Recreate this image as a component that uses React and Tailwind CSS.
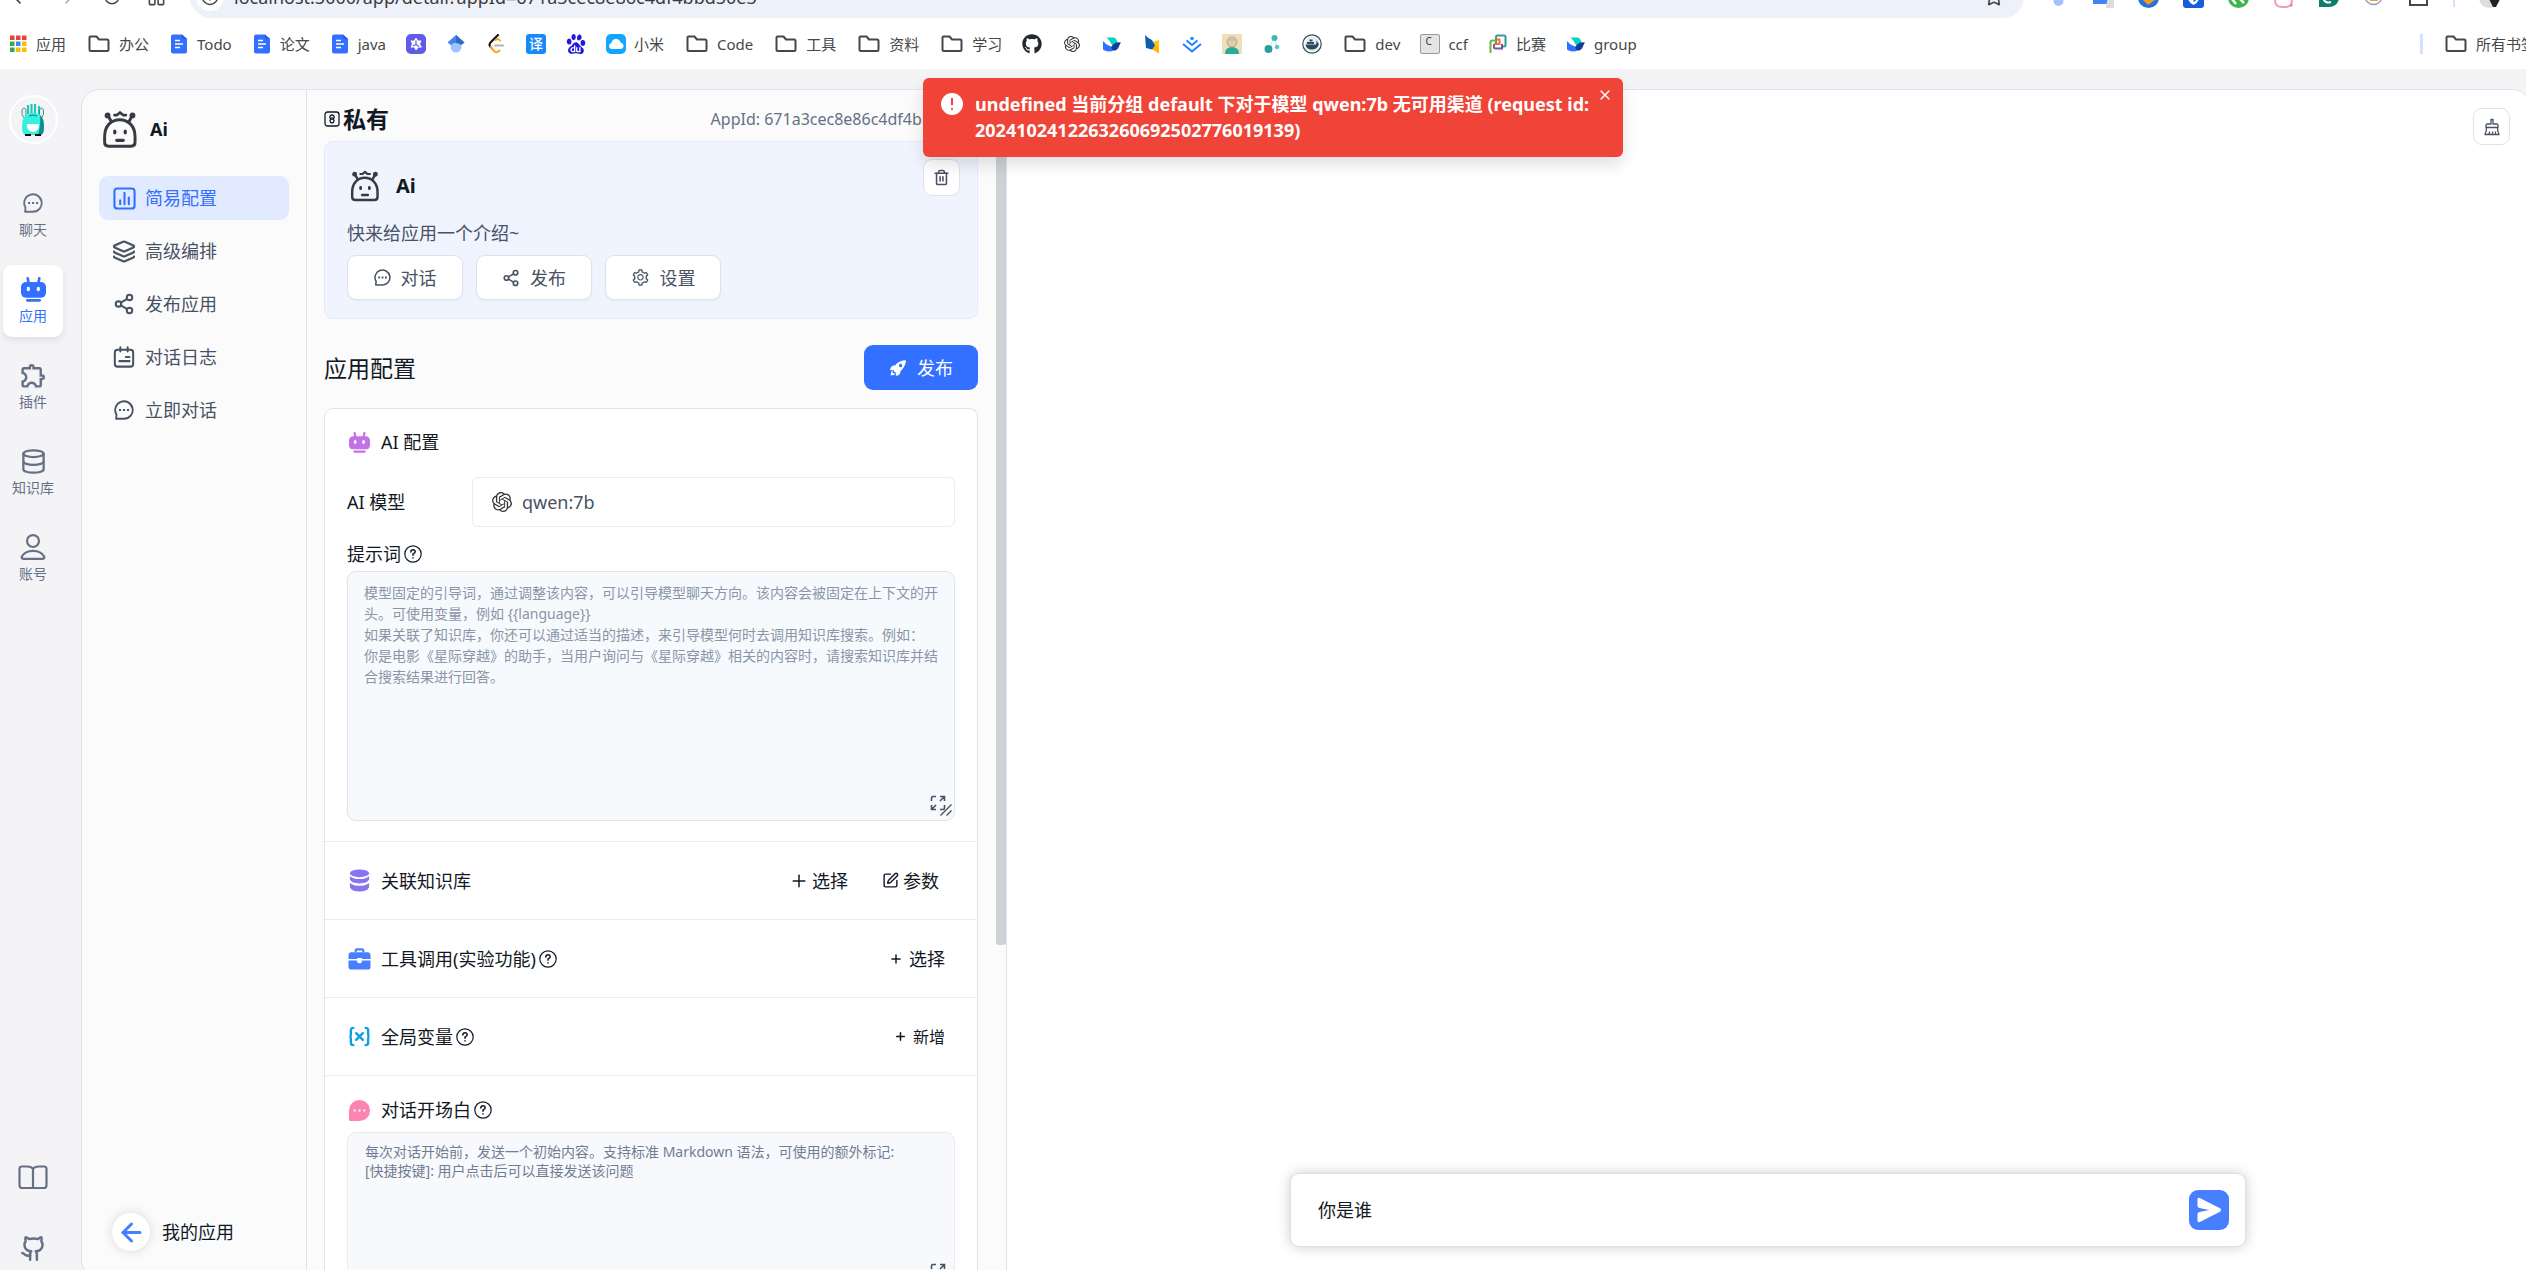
import React from "react";
import {
  ArrowLeft, ArrowRight, RotateCw, LayoutGrid, Star, Info, Layers, Share2, Github, Database, Plus, Trash2, SquarePen, X,
} from "lucide-react";
import { MdOutlineExtension } from "react-icons/md";
import { SiOpenai, SiBaidu } from "react-icons/si";
import { FaGithub } from "react-icons/fa";
import { IoRocketSharp } from "react-icons/io5";
import { AiOutlineSetting } from "react-icons/ai";

/* ---------- icons ---------- */

const FolderIcon = () => (
  <svg viewBox="0 0 25 20" className="h-5 w-[25px] shrink-0" fill="none" stroke="#474747" strokeWidth="2" strokeLinejoin="round">
    <path d="M3.500 3.500q0-1 1-1h6l2.500 3h8q1.500 0 1.500 1.500v8.500q0 1.500-1.500 1.500h-16q-1.500 0-1.500-1.500z" />
  </svg>
);

const Fav = ({ children }) => (
  <svg viewBox="0 0 20 20" className="h-5 w-5 shrink-0" fill="none">{children}</svg>
);

const AppsIcon = () => {
  const colors = ["#ea4335", "#ea4335", "#ea4335", "#34a853", "#4285f4", "#fbbc05", "#34a853", "#fbbc05", "#fbbc05"];
  return (
    <Fav>
      {colors.map((c, i) => (
        <rect key={i} x={2 + (i % 3) * 6} y={1.500 + Math.floor(i / 3) * 6} width="4.500" height="4.500" fill={c} />
      ))}
    </Fav>
  );
};

const DocIcon = () => (
  <Fav>
    <path d="M4 .5h9L18 5v12.500q0 2-2 2H4q-2 0-2-2v-15q0-2 2-2z" fill="#3370ff" />
    <path d="M13 .5 18 5h-3q-2 0-2-2z" fill="#245bdb" />
    <path d="M6 6.500h5M6 10h8M6 13.500h5" stroke="#fff" strokeWidth="1.400" />
  </Fav>
);

const PurpleIcon = () => (
  <Fav>
    <rect width="20" height="20" rx="5" fill="#6259e8" />
    <path d="M10 3.500l2 3h3.500L14 10l2 3.500h-3.500L10 16.500l-2-3H4.500L6 10 4.500 6.500H8z" fill="#fff" />
    <path d="M10 6.500v4l3 2M10 10.500l-3 1.500" stroke="#6259e8" strokeWidth="1.200" />
  </Fav>
);

const ScholarIcon = () => (
  <Fav>
    <circle cx="10" cy="13" r="5.500" fill="#a0c3ff" />
    <path d="M10 1 1.500 8.500 5 11q5-4.500 10 0l3.500-2.500z" fill="#4285f4" />
    <path d="M10 1v8q3.500 0 5 2l3.500-2.500z" fill="#356ac3" />
  </Fav>
);

const LeetIcon = () => (
  <Fav>
    <path d="M12 1 4.500 8.500q-2 2.300 0 4.500" stroke="#111" strokeWidth="2" strokeLinecap="round" />
    <path d="M14 6.500q-2-2.500-4.500-.5M4.500 13l3.500 4q2.500 2.500 5.500-.5" stroke="#ffa116" strokeWidth="2" strokeLinecap="round" />
    <path d="M9 11.500h8" stroke="#b3b3b3" strokeWidth="2" strokeLinecap="round" />
  </Fav>
);

const TranslateIcon = () => (
  <span className="flex h-5 w-5 shrink-0 items-center justify-center rounded-[3px] bg-[#1989fa] text-[14px] leading-5 font-medium text-white">译</span>
);

const CloudIcon = () => (
  <Fav>
    <rect width="20" height="20" rx="5" fill="#12a6ff" />
    <path d="M6 15q-3-.3-3-3 0-2.500 2.500-3Q6 5 10 5t4.500 3.500Q17.500 9 17.500 12T14 15z" fill="#fff" />
  </Fav>
);

const LarkIcon = () => (
  <Fav>
    <path d="M4.500 3.500h8q2.500 2 3 5L10.500 12Q8.500 7 4.500 3.500z" fill="#00d6b9" />
    <path d="M1 7q6 7 14 6-3 4.500-8 4.500-3.500 0-6-2z" fill="#3370ff" />
    <path d="M9.500 12.500q4-5.500 9.500-4-1 1-2 4-2 4.500-5 4-3-1-2.500-4z" fill="#133c9a" />
  </Fav>
);

const ButterflyIcon = () => (
  <Fav>
    <path d="M3 1q3 3.500 7 5v9.500L4 14z" fill="#0b5cad" />
    <path d="M10 8.500q2-1.500 7-2.500v8q-4 0-7 2z" fill="#ffc20e" />
    <path d="M10 10v5l7 4.500V14z" fill="#ffb300" />
    <path d="M10 6v9.500l3-4z" fill="#0b5cad" />
  </Fav>
);

const JuejinIcon = () => (
  <Fav>
    <path d="M10 2.500 12.300 4.500 10 6.500 7.700 4.500z" fill="#1e80ff" />
    <path d="M4.500 6.500 10 11l5.500-4.500M1 10l9 7.500 9-7.500" stroke="#1e80ff" strokeWidth="2" />
  </Fav>
);

const PortraitIcon = () => (
  <Fav>
    <rect width="20" height="20" fill="#f1dfb8" />
    <path d="M3 20q0-7 7-7t7 7z" fill="#2aa9a0" />
    <circle cx="10" cy="8" r="5" fill="#e3cda4" stroke="#a89f8a" />
    <path d="M5 8q0-6 5-6t5 6q-4-3-10 0z" fill="#c9c3ae" />
  </Fav>
);

const NodesIcon = () => (
  <Fav>
    <path d="M7 14l5-10 3 9" stroke="#bfe0e0" strokeWidth="1" />
    <circle cx="6.500" cy="15" r="4" fill="#2a9d9c" />
    <circle cx="12.500" cy="4" r="3" fill="#45b5b3" />
    <circle cx="15" cy="13" r="2.300" fill="#63c4c2" />
  </Fav>
);

const WhaleIcon = () => (
  <Fav>
    <circle cx="10" cy="10" r="9.200" fill="#fff" stroke="#394d54" strokeWidth="1.200" />
    <circle cx="10" cy="10" r="7.500" fill="#e6eef1" />
    <path d="M3.500 10.500h10.500q1-2.500 0-4 2 1 2 3h1q-1 6-7.500 6-5 0-6-5z" fill="#2b4a66" />
    <path d="M5 8h7v2H5zM7.500 5.500h3v2h-3z" fill="#394d54" />
  </Fav>
);

const KeycapIcon = () => (
  <span className="flex h-5 w-5 shrink-0 rounded-[2px] border border-[#9a9a9a] bg-[#e4e4e4] pl-1 text-[10px] leading-[13px] text-[#333]">C</span>
);

const SquaresIcon = () => (
  <Fav>
    <path d="M8 9V3q0-1.500 1.500-1.500H16q1.500 0 1.500 1.500v8q0 1.500-1.500 1.500h-2" stroke="#2f9e8f" strokeWidth="2" />
    <path d="M2.500 19V8q0-1.500 1.500-1.500h4" stroke="#6eb43f" strokeWidth="2" />
    <path d="M6 10v3q0 1.500 1.500 1.500H14V10" stroke="#7a52a8" strokeWidth="2" />
    <path d="M6 10h5.500V5.500H8" stroke="#e8703a" strokeWidth="2" />
  </Fav>
);

const FaceLogo = ({ className }) => (
  <svg viewBox="0 0 110 116" className={className} fill="none" stroke="#363c42" strokeWidth="9" strokeLinecap="round" strokeLinejoin="round">
    <path d="M8 80C8 45 30 28 54 28S101 45 101 80V97Q101 109 89 109H20Q8 109 8 97Z" />
    <path d="M18 15L28 33M93 15L83 33" />
    <circle cx="17" cy="15" r="6" fill="#363c42" strokeWidth="6" />
    <circle cx="93" cy="15" r="6" fill="#363c42" strokeWidth="6" />
    <path d="M38 14H46L55 6L64 14H73" strokeWidth="8" />
    <path d="M39 63v5M71 63v5M45 91h20" strokeWidth="10" />
  </svg>
);

const RobotIcon = ({ className, eye = "#fff" }) => (
  <svg viewBox="0 0 75 75" className={className} fill="currentColor">
    <path d="M20 4L23 18M55 4L52 18" stroke="currentColor" strokeWidth="8" strokeLinecap="round" />
    <rect y="15" width="75" height="47" rx="15" />
    <ellipse cx="22" cy="36" rx="5" ry="7" fill={eye} />
    <ellipse cx="52" cy="36" rx="5" ry="7" fill={eye} />
    <rect x="15" y="66" width="45" height="8" rx="4" />
  </svg>
);

const ChatIcon = ({ className }) => (
  <svg viewBox="0 0 24 24" className={className} fill="none" stroke="currentColor" strokeWidth="2.200" strokeLinejoin="round">
    <path d="M12 22.500H2.500L3 17.500A10.500 10.500 0 1 1 12 22.500z" />
    <path d="M6 12h2.500M10.800 12h2.500M15.600 12h2.500" strokeWidth="2.500" />
  </svg>
);

const UserIcon = ({ className }) => (
  <svg viewBox="0 0 24 24" className={className} fill="none" stroke="currentColor" strokeWidth="2" strokeLinejoin="round">
    <circle cx="12" cy="6.500" r="5.500" />
    <path d="M3.500 23Q1.500 23 1.500 21 4.500 15.500 12 15.500T22.500 21q0 2-2 2z" />
  </svg>
);

const BookIcon = ({ className }) => (
  <svg viewBox="0 0 30 24" className={className} fill="none" stroke="currentColor" strokeWidth="2.200" strokeLinejoin="round">
    <path d="M15 23V4Q13.500 1.500 9.500 1.500H4Q1.500 1.500 1.500 4V20Q1.500 23 4 23H26Q28.500 23 28.500 20V4Q28.500 1.500 26 1.500H20.500Q16.500 1.500 15 4" />
  </svg>
);

const ChartIcon = ({ className }) => (
  <svg viewBox="0 0 24 24" className={className} fill="none" stroke="currentColor" strokeWidth="2.200" strokeLinecap="round">
    <rect x="1.500" y="1.500" width="21" height="21" rx="3" />
    <path d="M7.500 14v4M12 6v12M16.500 11v7" />
  </svg>
);

const LogIcon = ({ className }) => (
  <svg viewBox="0 0 24 24" className={className} fill="none" stroke="currentColor" strokeWidth="2.200" strokeLinecap="round">
    <rect x="2" y="4" width="20" height="18.500" rx="3" />
    <path d="M8 1.500V6M16 1.500V6M14 12h4M7 16.500h11" />
  </svg>
);

const LockIcon = () => (
  <svg viewBox="0 0 16 16" className="h-4 w-4" fill="none" stroke="#111824" strokeWidth="1.300">
    <rect x="1" y="1" width="14" height="14" rx="2.500" />
    <path d="M8 4a2 2 0 0 1 1.500 3.500v1A2 2 0 1 1 6.500 8.500v-1A2 2 0 0 1 8 4zM8 6v3" />
  </svg>
);

const HelpIcon = () => (
  <svg viewBox="0 0 18 18" className="h-[18px] w-[18px] shrink-0" fill="none" stroke="#111824" strokeWidth="1.200" strokeLinecap="round">
    <circle cx="9" cy="9" r="8.200" />
    <path d="M6.800 7Q7 4.800 9 4.800T11.200 6.800Q11.200 8 9 9.200V10.300M9 12.700v.2" strokeWidth="1.500" />
  </svg>
);

const BrushIcon = () => (
  <svg viewBox="0 0 16 18" className="h-[18px] w-4" fill="none" stroke="#485264" strokeWidth="1.300" strokeLinejoin="round">
    <path d="M7 6V1.500h2V6h3.500q1.500 0 1.500 1.500v2H2v-2Q2 6 3.500 6zM2.500 9.500q0 4-1.500 7h14q-1.500-3-1.500-7M5 16.500l.7-3M8.300 16.500l.5-3M11.500 16.500v-3" />
  </svg>
);

const StackIcon = () => (
  <svg viewBox="0 0 24 24" className="h-[23px] w-[23px]" fill="#8774ee">
    <ellipse cx="12" cy="4.500" rx="10" ry="4" />
    <path d="M2 7.500Q6 10.500 12 10.500T22 7.500V11Q20 15 12 15T2 11z" />
    <path d="M2 14.500Q6 17.500 12 17.500T22 14.500V19Q20 23.500 12 23.500T2 19z" />
  </svg>
);

const BriefcaseIcon = () => (
  <svg viewBox="0 0 24 24" className="h-[23px] w-[23px]" fill="#487fff">
    <path d="M8 5.500V4Q8 2.500 9.500 2.500H14.500Q16 2.500 16 4V5.500" fill="none" stroke="#487fff" strokeWidth="2.200" />
    <path d="M3.500 5.500H20.500Q23.500 5.500 23.500 9V12.500H14.500V11.500H9.500V12.500H.5V9Q.5 5.500 3.500 5.500z" />
    <path d="M.5 14H9.500V15Q9.500 17 12 17T14.500 15V14H23.500V20.500Q23.500 23.500 20.500 23.500H3.500Q.5 23.500 .5 20.500z" />
    <path d="M11 11.500h2V14.500H11z" fill="#fff" />
  </svg>
);

const VariableIcon = () => (
  <svg viewBox="0 0 24 24" className="h-[23px] w-[23px]" fill="none" stroke="#0e9fe0" strokeWidth="2.500" strokeLinecap="round">
    <path d="M5.500 3Q3 3 3 5.500V9Q3 12 1.500 12 3 12 3 15V18.500Q3 21 5.500 21M18.500 3Q21 3 21 5.500V9Q21 12 22.500 12 21 12 21 15V18.500Q21 21 18.500 21M8.500 8.500l7 7M15.500 8.500l-7 7" />
  </svg>
);

const GreetingIcon = () => (
  <svg viewBox="0 0 24 24" className="h-[23px] w-[23px]" fill="#fd83b0">
    <path d="M12 1A11 11 0 1 1 12 23H3Q1 23 1 21V12A11 11 0 0 1 12 1z" />
    <path d="M6 12h2M11 12h2M16 12h2" stroke="#fff" strokeWidth="2" />
  </svg>
);

const ExpandIcon = () => (
  <svg viewBox="0 0 16 16" className="h-4 w-4" fill="none" stroke="#485264" strokeWidth="1.600">
    <path d="M1.500 6V3Q1.500 1.500 3 1.500H6M10 1.500H14.500V6M14 2L10 6M1.500 10V14.500H6M2 14L6 10M14.500 10V13Q14.500 14.500 13 14.500H10" />
  </svg>
);

const GripIcon = () => (
  <svg viewBox="0 0 12 12" className="h-3 w-3" stroke="#444" strokeWidth="1.200">
    <path d="M.5 11.500l11-11M6.500 11.500l5-5" />
  </svg>
);

const AvatarArt = () => (
  <svg viewBox="0 0 24 34" className="h-[34px] w-6">
    <path d="M7 2v9M10.500 1v10M14 1v10M18 3v8" stroke="#20c9b8" strokeWidth="2.200" />
    <path d="M1 7q2-4 4 0v6l-2 2q-3-3-2-8zM22.500 7q-2-4-4 0v6l2 2q3-3 2-8z" fill="#d8f5f0" stroke="#3a6f70" strokeWidth=".8" />
    <path d="M5 12q7-5 14 0 4 3 4 12 0 8-4 8H5q-4 0-4-8 0-9 4-12z" fill="#35f0dc" />
    <path d="M19 12q4 3 4 12 0 8-4 8h-2q3-10 2-20z" fill="#0f8d92" />
    <path d="M6 21h12q0 8-6 8t-6-8z" fill="#fff" />
    <path d="M8 13q4-2 8 0" stroke="#137a80" fill="none" />
    <path d="M4 32h6M14 32h6" stroke="#111" strokeWidth="2" />
  </svg>
);

/* ---------- browser chrome ---------- */

const bookmarks = [
  [<AppsIcon />, "应用"], [<FolderIcon />, "办公"], [<DocIcon />, "Todo"], [<DocIcon />, "论文"], [<DocIcon />, "java"],
  [<PurpleIcon />], [<ScholarIcon />], [<LeetIcon />], [<TranslateIcon />],
  [<SiBaidu className="h-5 w-5 shrink-0 text-[#2319dc]" />], [<CloudIcon />, "小米"], [<FolderIcon />, "Code"],
  [<FolderIcon />, "工具"], [<FolderIcon />, "资料"], [<FolderIcon />, "学习"],
  [<FaGithub className="h-5 w-5 shrink-0 text-[#24292e]" />], [<SiOpenai className="mx-0.5 h-4 w-4 shrink-0 text-[#333]" />],
  [<LarkIcon />], [<ButterflyIcon />], [<JuejinIcon />], [<PortraitIcon />], [<NodesIcon />], [<WhaleIcon />],
  [<FolderIcon />, "dev"], [<KeycapIcon />, "ccf"], [<SquaresIcon />, "比赛"], [<LarkIcon />, "group"],
];

const Ext = ({ children }) => (
  <svg viewBox="0 0 21 21" className="h-[21px] w-[21px] shrink-0" fill="none">{children}</svg>
);

function BrowserBar() {
  return (
    <header className="flex h-[69px] shrink-0 flex-col overflow-hidden bg-white text-[#474747]">
      <div className="flex h-[18px] shrink-0 items-end overflow-hidden">
        <div className="flex h-[42px] w-[190px] shrink-0 items-center justify-between pr-6 pl-2.5">
          <ArrowLeft size={20} />
          <ArrowRight size={20} className="text-[#b5b5b5]" />
          <RotateCw size={18} />
          <LayoutGrid size={19} />
        </div>
        <div className="flex h-[42px] min-w-0 flex-1 items-center rounded-full bg-[#edf1fa] pr-5 pl-[6px]">
          <span className="flex h-7 w-7 shrink-0 items-center justify-center rounded-full bg-white">
            <Info size={18} />
          </span>
          <input
            aria-label="地址"
            readOnly
            value="localhost:5000/app/detail?appId=671a3cec8e86c4df4bbd50e3"
            className="ml-2.5 min-w-0 flex-1 bg-transparent text-[18px] text-[#3c3c3c] outline-none"
          />
          <Star size={20} />
        </div>
        <div className="flex h-[42px] shrink-0 items-center gap-6 pl-6">
          <Ext><circle cx="10.500" cy="14" r="5" fill="#a3c3ff" /></Ext>
          <Ext><path d="M0 0h15l3 17H0z" fill="#4285f4" /><path d="M15 8h6v13h-8z" fill="#dcdcdc" /></Ext>
          <Ext><circle cx="10.500" cy="10.500" r="10.500" fill="#2374d8" /><path d="M4 12l10-4 3 5-7 5z" fill="#f39a2d" /></Ext>
          <Ext><rect width="21" height="21" rx="3" fill="#175ddc" /><path d="M5 4h11v7q0 4-5.500 7Q5 15 5 11z" fill="#fff" /><path d="M10.500 6v9q4-2 4-4.500V6z" fill="#175ddc" /></Ext>
          <Ext><circle cx="10.500" cy="10.500" r="10.500" fill="#3db54a" /><path d="M4 12l4 5M10 10l6 6" stroke="#fff" strokeWidth="2.500" /></Ext>
          <Ext><path d="M2 3v10q0 7 7 7h3q7 0 7-7V3" stroke="#f79ab8" strokeWidth="2" /><path d="M18 18l1 1" stroke="#f26a96" strokeWidth="3" /></Ext>
          <Ext><path d="M1 0h20v12q-2 8-10 8H1z" fill="#0b7f69" /><path d="M5 11q2 6 8 4" stroke="#fff" strokeWidth="2" /></Ext>
          <Ext><circle cx="10.500" cy="9" r="8.500" stroke="#8d9fc7" strokeWidth="1.500" /><path d="M7 10h8v4H7z" fill="#f0a030" /></Ext>
          <Ext><path d="M2 2v16h17V2" stroke="#474747" strokeWidth="2" /></Ext>
          <span className="h-5 w-0.5 bg-[#d3e3fd]" />
          <Ext><circle cx="10.500" cy="10.500" r="10.500" fill="#ddd" /><path d="M10 12h11l-4 8h-3z" fill="#222" /></Ext>
          <span className="-mr-1 h-1.5 w-1.5 rounded-full bg-[#474747]" />
        </div>
      </div>
      <nav aria-label="书签" className="flex flex-1 items-center gap-5 pl-2 text-[15px] leading-5 whitespace-nowrap">
        {bookmarks.map(([icon, text], i) => (
          <a key={i} href="#" className="flex items-center gap-2">
            {icon}
            {text && <span>{text}</span>}
          </a>
        ))}
        <span className="ml-auto h-5 w-[3px] shrink-0 bg-[#d3e3fd]" />
        <a href="#" className="-mr-[10px] flex shrink-0 items-center gap-2">
          <FolderIcon />
          <span>所有书签</span>
        </a>
      </nav>
    </header>
  );
}

/* ---------- app ---------- */

const sideItems = [
  [<ChatIcon className="h-5 w-5" />, "聊天"],
  [<RobotIcon className="h-[25px] w-[25px]" />, "应用", true],
  [<MdOutlineExtension className="h-[29px] w-[29px]" />, "插件"],
  [<Database size={27} strokeWidth={2} />, "知识库"],
  [<UserIcon className="h-[26px] w-[26px]" />, "账号"],
];

function Rail() {
  return (
    <aside className="flex w-[81px] shrink-0 flex-col pt-[26px] pr-[15px] pb-2 text-[#667085]">
      <a href="#" aria-label="头像" className="mx-auto flex h-[49px] w-[49px] items-center justify-center rounded-full border-2 border-white">
        <AvatarArt />
      </a>
      <nav className="mt-[35px] flex flex-col gap-3.5 pl-[3px]">
        {sideItems.map(([icon, text, active]) => (
          <a
            key={text}
            href="#"
            className={
              "flex h-[72px] w-[60px] flex-col items-center justify-center gap-1 rounded-[9px] text-[14px] leading-5 " +
              (active ? "bg-white text-[#3370ff] shadow-[0_3px_6px_rgba(19,51,107,0.1)]" : "")
            }
          >
            <span className="flex h-[26px] items-center justify-center">{icon}</span>
            {text}
          </a>
        ))}
      </nav>
      <div className="mt-auto flex flex-col items-center gap-[46px]">
        <a href="#" aria-label="文档"><BookIcon className="h-6 w-[30px]" /></a>
        <a href="#" aria-label="GitHub"><Github size={27} strokeWidth={2.200} /></a>
      </div>
    </aside>
  );
}

const navItems = [
  [<ChartIcon className="h-[23px] w-[23px]" />, "简易配置", true],
  [<Layers size={25} strokeWidth={2.200} />, "高级编排"],
  [<Share2 size={22} strokeWidth={2.200} />, "发布应用"],
  [<LogIcon className="h-[22px] w-[22px]" />, "对话日志"],
  [<ChatIcon className="h-5 w-5" />, "立即对话"],
];

function AppNav() {
  return (
    <div className="flex w-[225px] shrink-0 flex-col border-r border-[#dfe2ea] px-[17px] pt-[18px] pb-[26px]">
      <div className="flex h-[42px] items-center gap-3 pl-[3px]">
        <FaceLogo className="h-[39px] w-9" />
        <h1 className="text-[18px] leading-6 font-bold text-[#111824]">Ai</h1>
      </div>
      <nav className="mt-[26px] flex flex-col gap-[9px]">
        {navItems.map(([icon, text, active]) => (
          <a
            key={text}
            href="#"
            className={
              "flex h-11 items-center gap-[9px] rounded-[9px] pl-[13px] text-[18px] leading-6 " +
              (active ? "bg-[#e1eaff] text-[#3370ff]" : "text-[#485264]")
            }
          >
            <span className="flex w-6 items-center justify-center">{icon}</span>
            {text}
          </a>
        ))}
      </nav>
      <a href="#" className="mt-auto flex items-center gap-3 pl-[13px] text-[18px] leading-6 text-[#111824]">
        <span className="flex h-[38px] w-[38px] items-center justify-center rounded-full bg-white shadow-[0_0_12px_rgba(0,0,0,0.14)]">
          <ArrowLeft size={29} strokeWidth={2.500} className="text-[#487fff]" />
        </span>
        我的应用
      </a>
    </div>
  );
}

const OutlineButton = ({ icon, children }) => (
  <button className="flex h-[45px] w-[116px] items-center justify-center gap-[10px] rounded-[9px] border border-[#dfe2ea] bg-white text-[18px] leading-6 text-[#485264] shadow-[0_1px_2px_rgba(19,51,107,0.06)]">
    {icon}
    {children}
  </button>
);

const Row = ({ icon, title, help, children }) => (
  <div className="flex h-[78px] items-center border-t border-[#e8ebf0] pr-6 pl-[23px]">
    <span className="mr-[10px]">{icon}</span>
    <h3 className="flex items-center gap-[3px] text-[18px] leading-6">{title}{help && <HelpIcon />}</h3>
    <div className="ml-auto flex items-center">{children}</div>
  </div>
);

const promptHint = `模型固定的引导词，通过调整该内容，可以引导模型聊天方向。该内容会被固定在上下文的开头。可使用变量，例如 {{language}}
如果关联了知识库，你还可以通过适当的描述，来引导模型何时去调用知识库搜索。例如：
你是电影《星际穿越》的助手，当用户询问与《星际穿越》相关的内容时，请搜索知识库并结合搜索结果进行回答。`;

const greetingHint = `每次对话开始前，发送一个初始内容。支持标准 Markdown 语法，可使用的额外标记:
[快捷按键]: 用户点击后可以直接发送该问题`;

function ConfigPanel() {
  return (
    <section className="flex w-[700px] shrink-0 overflow-hidden border-r border-[#dfe2ea]">
      <div className="min-w-0 flex-1 pr-[18px] pl-[17px] text-[#111824]">
        <div className="flex h-[51px] items-center pt-[7px]">
          <LockIcon />
          <h2 className="ml-[3px] text-[23px] leading-7 font-bold">私有</h2>
          <span className="ml-auto text-[16px] leading-6 text-[#667085]">AppId: 671a3cec8e86c4df4bbd50e3</span>
        </div>

        <div className="relative rounded-[9px] border border-[#e1eaff] bg-[#f0f4ff] px-[22px] pt-[23px] pb-[18px]">
          <div className="flex h-[42px] items-center gap-4">
            <FaceLogo className="ml-[3px] h-8 w-[30px]" />
            <h3 className="text-[20px] leading-7 font-bold">Ai</h3>
          </div>
          <p className="mt-[13px] text-[18px] leading-[27px] text-[#485264]">快来给应用一个介绍~</p>
          <div className="mt-2 flex gap-[13px]">
            <OutlineButton icon={<ChatIcon className="h-[17px] w-[17px]" />}>对话</OutlineButton>
            <OutlineButton icon={<Share2 size={18} strokeWidth={2.200} />}>发布</OutlineButton>
            <OutlineButton icon={<AiOutlineSetting size={19} />}>设置</OutlineButton>
          </div>
          <button aria-label="删除" className="absolute top-[17px] right-[17px] flex h-[37px] w-[37px] items-center justify-center rounded-[9px] border border-[#dfe2ea] bg-white text-[#485264]">
            <Trash2 size={17} strokeWidth={2.200} />
          </button>
        </div>

        <div className="mt-[26px] flex h-[45px] items-center justify-between">
          <h2 className="text-[23px] leading-7">应用配置</h2>
          <button className="flex h-[45px] w-[114px] items-center justify-center gap-[10px] rounded-[9px] bg-[#3370ff] text-[18px] leading-6 text-white">
            <IoRocketSharp size={18} />
            发布
          </button>
        </div>

        <div className="mt-[18px] rounded-t-[9px] border border-b-0 border-[#dfe2ea] bg-white">
          <div className="px-[22px] pt-[19px] pb-5">
            <div className="flex h-7 items-center gap-[9px] text-[18px] leading-6">
              <RobotIcon className="mx-0.5 h-[21px] w-[21px] text-[#c172e8]" />
              <h3>AI 配置</h3>
            </div>
            <div className="mt-[21px] flex items-center">
              <label htmlFor="model" className="w-[125px] text-[18px] leading-6">AI 模型</label>
              <div className="flex h-[50px] flex-1 items-center gap-[10px] rounded-md border border-[#e8ebf0] pr-4 pl-[19px]">
                <SiOpenai className="h-5 w-5 text-[#333]" />
                <select id="model" className="h-full flex-1 appearance-none bg-transparent text-[18px] text-[#485264] outline-none">
                  <option>qwen:7b</option>
                </select>
              </div>
            </div>
            <label htmlFor="prompt" className="mt-[13px] flex h-7 items-center gap-[3px] text-[18px] leading-6">
              提示词<HelpIcon />
            </label>
            <div className="relative mt-[3px]">
              <textarea
                id="prompt"
                placeholder={promptHint}
                className="block h-[250px] w-full resize-none rounded-[9px] border border-[#dfe2ea] bg-[#f7fafd] pt-2.5 pr-3 pl-4 text-[14px] leading-[21px] outline-none placeholder:text-[#8a95a7]"
              />
              <button aria-label="展开" className="absolute right-[9px] bottom-[10px]"><ExpandIcon /></button>
              <span className="pointer-events-none absolute right-[3px] bottom-[5px]"><GripIcon /></span>
            </div>
          </div>

          <Row icon={<StackIcon />} title="关联知识库">
            <button className="flex items-center gap-[3px] text-[18px] leading-6"><Plus size={20} strokeWidth={1.800} />选择</button>
            <button className="mr-[14px] ml-[34px] flex items-center gap-1 text-[18px] leading-6"><SquarePen size={17} />参数</button>
          </Row>
          <Row icon={<BriefcaseIcon />} title="工具调用(实验功能)" help>
            <button className="mr-2 flex items-center gap-1.5 text-[18px] leading-6"><Plus size={14} strokeWidth={2.500} />选择</button>
          </Row>
          <Row icon={<VariableIcon />} title="全局变量" help>
            <button className="mr-2 flex items-center gap-1.5 text-[16px] leading-6"><Plus size={13} strokeWidth={2.800} />新增</button>
          </Row>

          <div className="border-t border-[#e8ebf0] px-[22px] pt-5">
            <div className="flex h-7 items-center gap-[10px] pl-px text-[18px] leading-6">
              <GreetingIcon />
              <label htmlFor="greeting" className="flex items-center gap-[3px]">对话开场白<HelpIcon /></label>
            </div>
            <div className="relative mt-2">
              <textarea
                id="greeting"
                placeholder={greetingHint}
                className="block h-[160px] w-full resize-none rounded-[9px] border border-[#e8ebf0] bg-[#f8f9fc] px-[17px] py-[9px] text-[14px] leading-[19px] outline-none placeholder:text-[#717d92]"
              />
              <button aria-label="展开" className="absolute right-[9px] bottom-[13px]"><ExpandIcon /></button>
            </div>
          </div>
        </div>
      </div>
      <div className="h-[855px] w-2.5 shrink-0 rounded-b-[3px] bg-[#ced2d6]" />
    </section>
  );
}

function ChatPanel() {
  return (
    <section className="flex min-w-0 flex-1 flex-col bg-white px-[19px] pt-[18px] pb-[30px]">
      <button aria-label="清空" className="flex h-[37px] w-[37px] items-center justify-center self-end rounded-[9px] border border-[#dfe2ea] bg-white">
        <BrushIcon />
      </button>
      <form className="mx-auto mt-auto flex h-[74px] w-full max-w-[956px] items-center rounded-[9px] border border-[#e0e0e0] bg-white pr-4 pl-[27px] shadow-[0_0_13px_rgba(0,0,0,0.2)]">
        <input aria-label="输入问题" defaultValue="你是谁" className="min-w-0 flex-1 bg-transparent text-[18px] leading-6 text-[#111824] outline-none" />
        <button type="button" aria-label="发送" className="flex h-10 w-10 items-center justify-center rounded-[9px] bg-[#487fff]">
          <svg viewBox="0 0 26 26" className="h-[26px] w-[26px]" fill="#fff">
            <path d="M1.500 2.500Q1.500 0 3.800 1L24 11.300Q26 13 24 14.700L3.800 25Q1.500 26 1.500 23.500V17Q1.500 15.500 3.500 15L13 13 3.500 11Q1.500 10.500 1.500 9z" />
          </svg>
        </button>
      </form>
    </section>
  );
}

function Toast() {
  return (
    <div className="pointer-events-none absolute inset-x-0 top-[78px] flex justify-center pl-5">
      <div role="alert" className="pointer-events-auto flex h-[79px] w-[700px] items-start rounded-md bg-[#f04438] pt-[13px] pr-2.5 pl-[18px] text-white shadow-[0_8px_16px_rgba(0,0,0,0.12)]">
        <svg viewBox="0 0 22 22" className="mt-0.5 h-[22px] w-[22px] shrink-0">
          <circle cx="11" cy="11" r="11" fill="#fff" />
          <path d="M11 5v7M11 15v1.800" stroke="#f04438" strokeWidth="2" />
        </svg>
        <p className="ml-3 flex-1 text-[18px] leading-[26px] font-bold">
          undefined 当前分组 default 下对于模型 qwen:7b 无可用渠道 (request id: 2024102412263260692502776019139)
        </p>
        <button aria-label="关闭" className="-mt-1"><X size={16} /></button>
      </div>
    </div>
  );
}

export default function App() {
  return (
    <div
      lang="zh-CN"
      className="relative flex h-screen flex-col overflow-hidden bg-[#f4f4f7] font-['Noto_Sans','Noto_Sans_CJK_SC',sans-serif]"
    >
      <BrowserBar />
      <div className="flex min-h-0 flex-1">
        <Rail />
        <main className="mt-5 -mr-1 -mb-2 flex min-w-0 flex-1 overflow-hidden rounded-[18px] border border-[#dfe2ea] bg-[#fbfbfc]">
          <AppNav />
          <ConfigPanel />
          <ChatPanel />
        </main>
      </div>
      <Toast />
    </div>
  );
}
